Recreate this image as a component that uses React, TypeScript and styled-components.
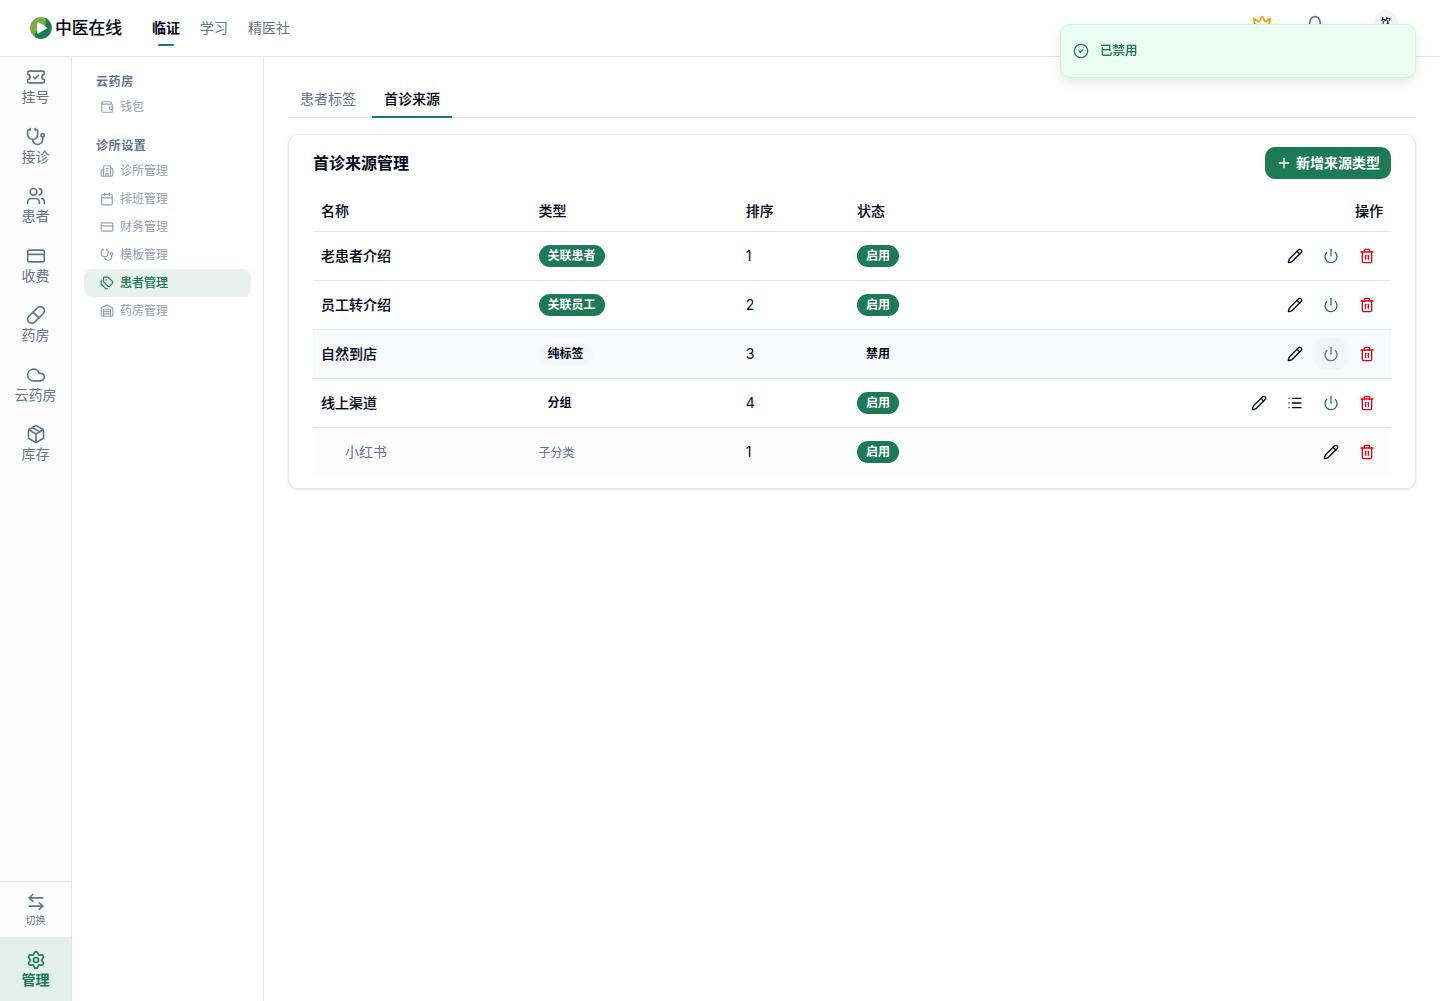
import React from 'react';
import styled, { createGlobalStyle, css } from 'styled-components';
import {
  ArrowLeftRight,
  Bell,
  Building2,
  Calendar,
  CircleCheck,
  Cloud,
  CreditCard,
  Crown,
  List,
  Package,
  Pencil,
  Pill,
  Plus,
  Power,
  Settings,
  Stethoscope,
  Tags,
  TicketCheck,
  Trash2,
  Users,
  Wallet,
  Warehouse,
  type LucideIcon,
} from 'lucide-react';

const color = {
  primary: '#1c7a58',
  text: '#020817',
  muted: '#64748b',
  faint: '#94a0b4',
  border: '#e2e8f0',
  danger: '#e7000b',
};

const medium = css`
  font-weight: 500;
  -webkit-text-stroke: 0.1px currentColor;
`;

const GlobalStyle = createGlobalStyle`
  *, *::before, *::after { box-sizing: border-box; }
  body {
    margin: 0;
    background: #fff;
    color: ${color.text};
    font-family: Inter, "Noto Sans CJK SC", sans-serif;
    font-size: 14px;
    line-height: 20px;
  }
  button { font: inherit; color: inherit; border: 0; padding: 0; background: none; cursor: pointer; }
  svg { flex: none; display: block; }
`;

const Page = styled.div`
  display: flex;
  flex-direction: column;
  height: 1001px;
  overflow: hidden;
`;

const Header = styled.header`
  flex: none;
  display: flex;
  align-items: center;
  height: 57px;
  padding: 0 30px;
  border-bottom: 1px solid ${color.border};
`;

const Brand = styled.div`
  display: flex;
  align-items: center;
  gap: 3px;
  width: 122px;
  font-size: 16.8px;
  ${medium}
  white-space: nowrap;
`;

const TopNav = styled.nav`
  display: flex;
  gap: 20px;
  height: 56px;
  align-items: center;
`;

const TopLink = styled.a<{ $active?: boolean }>`
  position: relative;
  color: ${p => (p.$active ? color.text : color.muted)};
  font-weight: ${p => (p.$active ? 600 : 400)};
  ${p =>
    p.$active &&
    css`
      &::after {
        content: '';
        position: absolute;
        left: 6px;
        right: 6px;
        bottom: -8px;
        height: 2px;
        border-radius: 2px;
        background: ${color.primary};
      }
    `}
`;

const HeaderActions = styled.div`
  display: flex;
  align-items: flex-start;
  height: 36px;
  margin-left: auto;
`;

const HeaderIcon = styled.button<{ $tone: string; $gap: number; $top: number }>`
  color: ${p => p.$tone};
  margin: ${p => p.$top}px ${p => p.$gap}px 0 0;
`;

const Avatar = styled.span`
  display: grid;
  place-items: center;
  width: 24px;
  height: 24px;
  margin-right: 12px;
  border-radius: 50%;
  background: #f4f5f6;
  font-size: 10px;
  font-weight: 500;
`;

const Body = styled.div`
  flex: 1;
  display: flex;
  min-height: 0;
`;

const Rail = styled.aside`
  flex: none;
  display: flex;
  flex-direction: column;
  width: 72px;
  background: #fcfcfc;
  border-right: 1px solid ${color.border};
`;

const RailItem = styled.button`
  display: flex;
  flex-direction: column;
  align-items: center;
  gap: 1px;
  padding: 10px 0 11px;
  color: ${color.muted};
  line-height: 17.5px;
`;

const RailFooter = styled.div`
  display: flex;
  flex-direction: column;
  margin-top: auto;
  border-top: 1px solid ${color.border};
`;

const SwitchItem = styled(RailItem)`
  height: 55px;
  gap: 0;
  font-size: 10px;
`;

const ManageItem = styled(RailItem)`
  height: 64px;
  padding-top: 13px;
  background: #e4eeeb;
  color: ${color.primary};
  font-weight: 600;
`;

const SubNav = styled.aside`
  flex: none;
  display: flex;
  flex-direction: column;
  gap: 16px;
  width: 192px;
  padding: 16px 12px;
  border-right: 1px solid ${color.border};
`;

const GroupTitle = styled.h2`
  margin: 0 0 4px;
  padding: 1px 12px 0;
  color: ${color.muted};
  font-size: 12px;
  line-height: 15px;
  font-weight: 600;
  letter-spacing: 0.6px;
`;

const SubLink = styled.a<{ $active?: boolean }>`
  display: flex;
  align-items: center;
  gap: 6px;
  height: 28px;
  padding: 0 16px;
  border-radius: 8px;
  font-size: 12px;
  line-height: 16px;
  color: ${p => (p.$active ? color.primary : color.faint)};
  background: ${p => (p.$active ? '#e8f1ee' : 'transparent')};
  ${p => p.$active && medium}
`;

const Main = styled.main`
  flex: 1;
  min-width: 0;
  padding: 24px;
`;

const Tabs = styled.div`
  display: flex;
  gap: 4px;
  height: 37px;
  margin-bottom: 16px;
  border-bottom: 1px solid ${color.border};
`;

const Tab = styled.button<{ $active?: boolean }>`
  height: 37px;
  padding: 0 12px;
  border-bottom: 2px solid ${p => (p.$active ? color.primary : 'transparent')};
  color: ${p => (p.$active ? color.text : color.muted)};
  ${p => p.$active && medium}
`;

const Card = styled.section`
  padding: 12px 24px;
  border: 1px solid ${color.border};
  border-radius: 10px;
  box-shadow: 0 1px 3px rgba(0, 0, 0, 0.1), 0 1px 2px -1px rgba(0, 0, 0, 0.1);
`;

const CardHead = styled.div`
  display: flex;
  align-items: center;
  justify-content: space-between;
  margin-bottom: 12px;
`;

const CardTitle = styled.h1`
  margin: 0;
  font-size: 16px;
  line-height: 24px;
  font-weight: 600;
`;

const AddButton = styled.button`
  display: flex;
  align-items: center;
  gap: 4px;
  height: 32px;
  padding: 0 11px;
  border-radius: 10px;
  background: ${color.primary};
  color: #fff;
  font-weight: 600;
`;

const Table = styled.table`
  width: 100%;
  table-layout: fixed;
  border-collapse: separate;
  border-spacing: 0;
`;

const Th = styled.th<{ $width?: number; $right?: boolean }>`
  width: ${p => (p.$width ? `${p.$width}px` : 'auto')};
  height: 41px;
  padding: 0 8px;
  text-align: ${p => (p.$right ? 'right' : 'left')};
  ${medium}
  border-bottom: 1px solid ${color.border};
`;

const Td = styled.td`
  height: 49px;
  padding: 0 8px;
  border-bottom: 1px solid ${color.border};
`;

const Tr = styled.tr<{ $bg?: string }>`
  background: ${p => p.$bg ?? 'transparent'};
  &:last-child ${Td} {
    height: 48px;
    border-bottom: 0;
  }
`;

const Name = styled.span<{ $child?: boolean }>`
  color: ${p => (p.$child ? color.muted : color.text)};
  padding-left: ${p => (p.$child ? 24 : 0)}px;
  ${p => !p.$child && medium}
`;

const SmallText = styled.span`
  display: block;
  padding-top: 1px;
  font-size: 12px;
  color: ${color.muted};
`;

type BadgeTone = 'solid' | 'soft' | 'plain';
const badgeTones = {
  solid: css`background: ${color.primary}; color: #fff;`,
  soft: css`background: #f5f6f8; color: ${color.text};`,
  plain: css`background: transparent; color: ${color.text};`,
};

const Badge = styled.span<{ $tone: BadgeTone }>`
  display: flex;
  align-items: center;
  width: fit-content;
  height: 22px;
  padding: 0 9px;
  border-radius: 11px;
  font-size: 12px;
  line-height: 16px;
  font-weight: 600;
  ${p => badgeTones[p.$tone]}
`;

const Actions = styled.div`
  display: flex;
  justify-content: flex-end;
  gap: 4px;
`;

const IconButton = styled.button<{ $tone?: string; $hovered?: boolean }>`
  display: grid;
  place-items: center;
  width: 32px;
  height: 32px;
  border-radius: 10px;
  color: ${p => p.$tone ?? color.text};
  background: ${p => (p.$hovered ? '#f4f5f6' : 'transparent')};
`;

const Toast = styled.div`
  position: fixed;
  top: 24px;
  right: 24px;
  display: flex;
  align-items: center;
  gap: 11px;
  width: 356px;
  height: 54px;
  padding: 0 12px;
  border: 1px solid #bffcd9;
  border-radius: 10px;
  background: #ecfdf3;
  color: ${color.primary};
  box-shadow: 0 4px 12px rgba(0, 0, 0, 0.1);
  font-size: 12.5px;
  ${medium}
`;

const railItems: [LucideIcon, string][] = [
  [TicketCheck, '挂号'],
  [Stethoscope, '接诊'],
  [Users, '患者'],
  [CreditCard, '收费'],
  [Pill, '药房'],
  [Cloud, '云药房'],
  [Package, '库存'],
];

const groups: { title: string; items: [LucideIcon, string][] }[] = [
  { title: '云药房', items: [[Wallet, '钱包']] },
  {
    title: '诊所设置',
    items: [
      [Building2, '诊所管理'],
      [Calendar, '排班管理'],
      [CreditCard, '财务管理'],
      [Stethoscope, '模板管理'],
      [Tags, '患者管理'],
      [Warehouse, '药房管理'],
    ],
  },
];

interface Source {
  name: string;
  type: string;
  tone?: BadgeTone;
  order: number;
  enabled: boolean;
  child?: boolean;
  group?: boolean;
}

const sources: Source[] = [
  { name: '老患者介绍', type: '关联患者', tone: 'solid', order: 1, enabled: true },
  { name: '员工转介绍', type: '关联员工', tone: 'solid', order: 2, enabled: true },
  { name: '自然到店', type: '纯标签', tone: 'soft', order: 3, enabled: false },
  { name: '线上渠道', type: '分组', tone: 'plain', order: 4, enabled: true, group: true },
  { name: '小红书', type: '子分类', order: 1, enabled: true, child: true },
];

const Logo = () => (
  <svg width="22" height="22" viewBox="0 0 22 22">
    <circle cx="11" cy="11" r="11" fill="#7fad45" />
    <path d="M15.2 0.8A11 11 0 1 1 5.6 20.6C3.8 16.6 5.4 14.2 8.4 13.8 14 13 17 9 15.2 0.8Z" fill="#1c7a58" />
    <path d="M7.2 6.3Q7.2 4.6 8.8 5.4L16.3 9.9Q17.6 10.9 16.3 11.8L8.8 16.3Q7.2 17.1 7.2 15.4Z" fill="#fff" />
  </svg>
);

const SourceRow = ({ row }: { row: Source }) => (
  <Tr $bg={row.child ? '#fcfcfc' : row.enabled ? undefined : '#f9fafc'}>
    <Td><Name $child={row.child}>{row.name}</Name></Td>
    <Td>{row.tone ? <Badge $tone={row.tone}>{row.type}</Badge> : <SmallText>{row.type}</SmallText>}</Td>
    <Td>{row.order}</Td>
    <Td><Badge $tone={row.enabled ? 'solid' : 'plain'}>{row.enabled ? '启用' : '禁用'}</Badge></Td>
    <Td>
      <Actions>
        <IconButton><Pencil size={16} /></IconButton>
        {row.group && <IconButton><List size={16} /></IconButton>}
        {!row.child && (
          <IconButton $tone={row.enabled ? color.primary : color.muted} $hovered={!row.enabled}>
            <Power size={16} />
          </IconButton>
        )}
        <IconButton $tone={color.danger}><Trash2 size={16} /></IconButton>
      </Actions>
    </Td>
  </Tr>
);

export default function App() {
  return (
    <Page>
      <GlobalStyle />
      <Header>
        <Brand><Logo />中医在线</Brand>
        <TopNav>
          <TopLink $active>临证</TopLink>
          <TopLink>学习</TopLink>
          <TopLink>精医社</TopLink>
        </TopNav>
        <HeaderActions>
          <HeaderIcon $tone="#ff9d0a" $gap={32.5} $top={4}><Crown size={20} /></HeaderIcon>
          <HeaderIcon $tone={color.muted} $gap={49.5} $top={5}><Bell size={20} /></HeaderIcon>
          <Avatar>饮</Avatar>
        </HeaderActions>
      </Header>
      <Body>
        <Rail>
          {railItems.map(([Icon, label]) => (
            <RailItem key={label}><Icon size={20} />{label}</RailItem>
          ))}
          <RailFooter>
            <SwitchItem><ArrowLeftRight size={20} />切换</SwitchItem>
            <ManageItem><Settings size={20} />管理</ManageItem>
          </RailFooter>
        </Rail>
        <SubNav>
          {groups.map(group => (
            <div key={group.title}>
              <GroupTitle>{group.title}</GroupTitle>
              {group.items.map(([Icon, label]) => (
                <SubLink key={label} $active={label === '患者管理'}><Icon size={14} />{label}</SubLink>
              ))}
            </div>
          ))}
        </SubNav>
        <Main>
          <Tabs>
            <Tab>患者标签</Tab>
            <Tab $active>首诊来源</Tab>
          </Tabs>
          <Card>
            <CardHead>
              <CardTitle>首诊来源管理</CardTitle>
              <AddButton><Plus size={16} />新增来源类型</AddButton>
            </CardHead>
            <Table>
              <thead>
                <tr>
                  <Th $width={217.6}>名称</Th>
                  <Th $width={207.2}>类型</Th>
                  <Th $width={111.2}>排序</Th>
                  <Th $width={130}>状态</Th>
                  <Th $right>操作</Th>
                </tr>
              </thead>
              <tbody>
                {sources.map(row => <SourceRow key={row.name} row={row} />)}
              </tbody>
            </Table>
          </Card>
        </Main>
      </Body>
      <Toast role="status"><CircleCheck size={16} strokeWidth={1.8} />已禁用</Toast>
    </Page>
  );
}
